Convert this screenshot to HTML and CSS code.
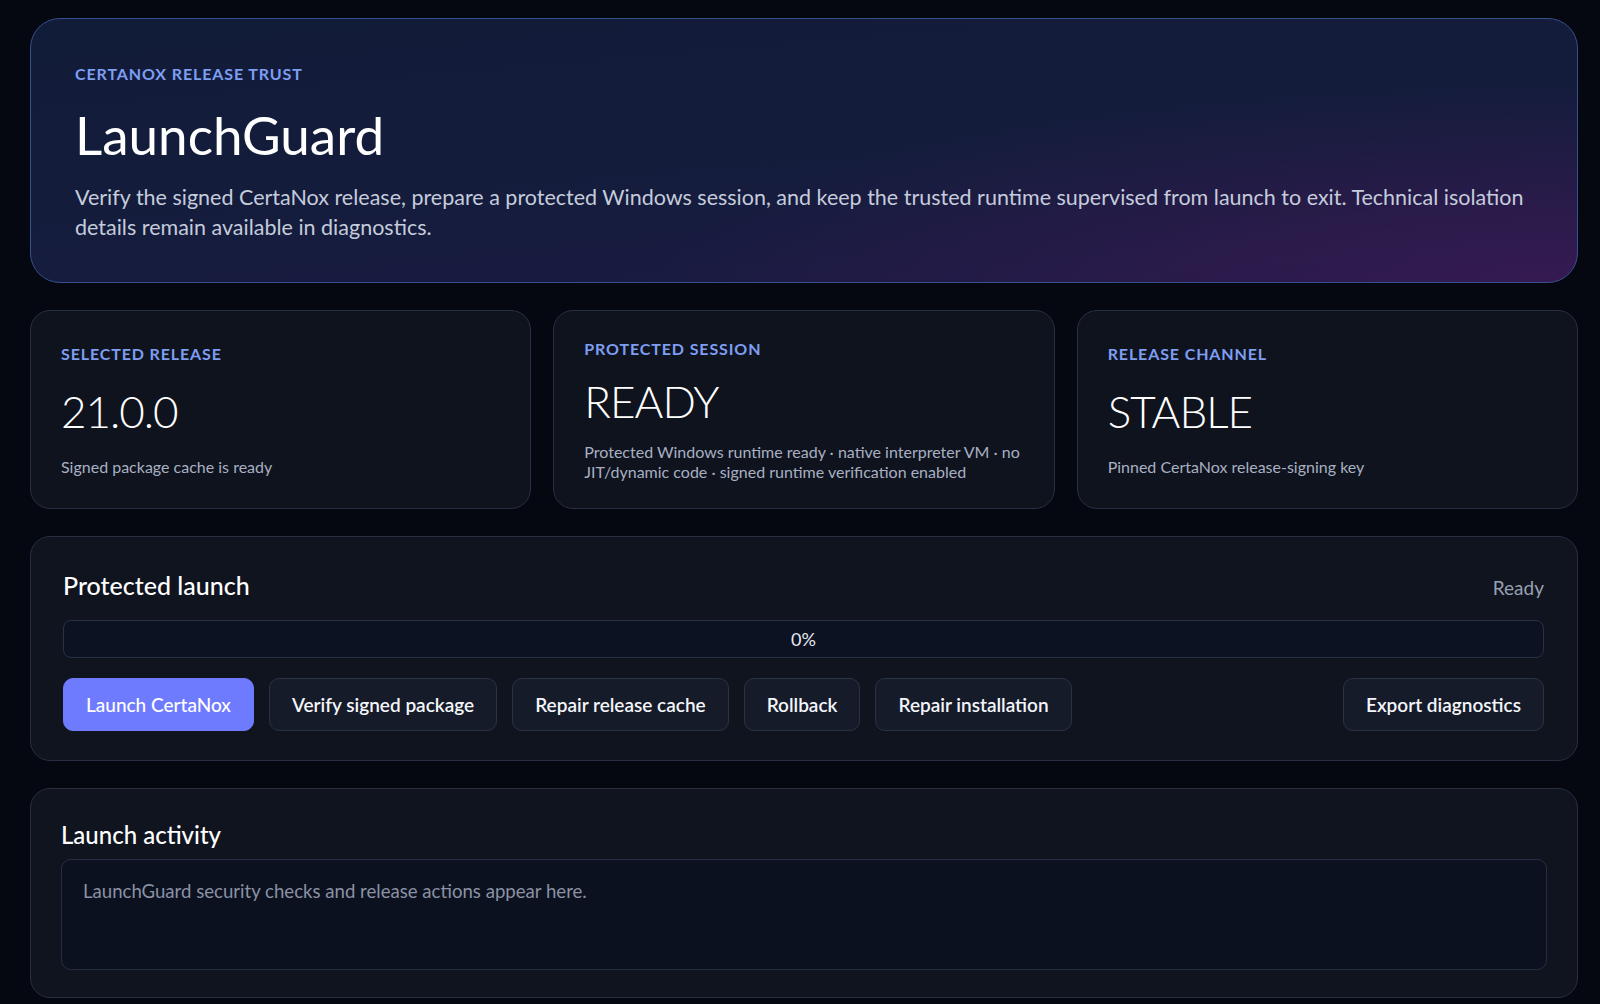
FILE: index.html
```html
<!DOCTYPE html>
<html lang="en">
<head>
    <meta charset="UTF-8">
    <meta name="viewport" content="width=device-width, initial-scale=1.0">
    <title>LaunchGuard</title>
    <link rel="stylesheet" href="styles.css">
</head>
<body>
    <main class="shell">
        <section class="hero">
            <p class="eyebrow">CERTANOX RELEASE TRUST</p>
            <h1 class="hero-title">LaunchGuard</h1>
            <p class="hero-text">Verify the signed CertaNox release, prepare a protected Windows session, and keep the trusted runtime supervised from launch to exit. Technical isolation details remain available in diagnostics.</p>
        </section>

        <section class="stats">
            <div class="stat">
                <p class="eyebrow">SELECTED RELEASE</p>
                <div class="stat-value">21.0.0</div>
                <p class="stat-note">Signed package cache is ready</p>
            </div>
            <div class="stat">
                <p class="eyebrow">PROTECTED SESSION</p>
                <div class="stat-value">READY</div>
                <p class="stat-note">Protected Windows runtime ready · native interpreter VM · no JIT/dynamic code · signed runtime verification enabled</p>
            </div>
            <div class="stat">
                <p class="eyebrow">RELEASE CHANNEL</p>
                <div class="stat-value">STABLE</div>
                <p class="stat-note">Pinned CertaNox release-signing key</p>
            </div>
        </section>

        <section class="panel launch">
            <div class="panel-head">
                <h2 class="panel-title">Protected launch</h2>
                <span class="status">Ready</span>
            </div>
            <div class="progress">
                <div class="progress-fill" style="width: 0%"></div>
                <span class="progress-label">0%</span>
            </div>
            <div class="actions">
                <button class="btn btn-primary">Launch CertaNox</button>
                <button class="btn">Verify signed package</button>
                <button class="btn">Repair release cache</button>
                <button class="btn">Rollback</button>
                <button class="btn">Repair installation</button>
                <button class="btn btn-end">Export diagnostics</button>
            </div>
        </section>

        <section class="panel activity">
            <h2 class="panel-title">Launch activity</h2>
            <div class="log">
                <p class="log-empty">LaunchGuard security checks and release actions appear here.</p>
            </div>
        </section>
    </main>
</body>
</html>
```

FILE: styles.css
```css
*{
    margin: 0;
    padding: 0;
    box-sizing: border-box;
}
html,body{
    width: 100%;
    min-height: 100%;
    background-color: #050811;
}
body{
    font-family: "Segoe UI", Lato, "Noto Sans", sans-serif;
    color: #f3f5fa;
}
.shell{
    display: flex;
    flex-direction: column;
    gap: 27px;
    padding: 18px 22px 30px 30px;
}
.eyebrow{
    font-size: 16px;
    font-weight: 700;
    letter-spacing: 0.055em;
    line-height: 20px;
    color: #7d9ef3;
}

/* hero */
.hero{
    padding: 45px 44px 40px;
    border: 1px solid #35518d;
    border-radius: 30px;
    background:
        radial-gradient(ellipse 80% 100% at 100% 100%, rgba(74, 26, 92, 0.55), rgba(74, 26, 92, 0) 75%),
        linear-gradient(175deg, #111c38 0%, #151c3d 60%, #1d1a45 100%);
}
.hero-title{
    margin-top: 21px;
    font-size: 53px;
    font-weight: 400;
    line-height: 60px;
    color: #fff;
}
.hero-text{
    margin-top: 17px;
    font-size: 21.5px;
    line-height: 30px;
    color: #c5ccdc;
}

/* stat cards */
.stats{
    display: grid;
    grid-template-columns: repeat(3, 1fr);
    gap: 22px;
}
.stat{
    display: flex;
    flex-direction: column;
    justify-content: space-evenly;
    padding: 28px 30px 26px;
    background-color: #0f131e;
    border: 1px solid #283042;
    border-radius: 20px;
}
.stat-value{
    margin-top: 17px;
    font-size: 44px;
    font-weight: 300;
    letter-spacing: -1px;
    line-height: 50px;
    color: #fff;
}
.stat-note{
    margin-top: 16px;
    font-size: 16px;
    line-height: 20px;
    color: #a8b0c2;
}

/* panels */
.panel{
    padding: 32px 33px 29px 32px;
    background-color: #10141f;
    border: 1px solid #272f41;
    border-radius: 20px;
}
.panel-head{
    display: flex;
    align-items: baseline;
    justify-content: space-between;
}
.panel-title{
    font-size: 25px;
    font-weight: 500;
    line-height: 32px;
    color: #fff;
}
.status{
    font-size: 19px;
    line-height: 24px;
    color: #98a0b1;
}
.progress{
    position: relative;
    display: flex;
    align-items: center;
    justify-content: center;
    height: 38px;
    margin-top: 19px;
    background-color: #0c1222;
    border: 1px solid #283246;
    border-radius: 8px;
    overflow: hidden;
}
.progress-fill{
    position: absolute;
    left: 0;
    top: 0;
    bottom: 0;
    background-color: #6e7bff;
}
.progress-label{
    position: relative;
    font-size: 18px;
    color: #e6e9f0;
}
.actions{
    display: flex;
    gap: 15px;
    margin-top: 20px;
}
.btn{
    height: 53px;
    padding: 0 22px;
    font-family: inherit;
    font-size: 19px;
    font-weight: 600;
    color: #f3f5fa;
    background-color: #151b29;
    border: 1px solid #2a3345;
    border-radius: 10px;
    cursor: pointer;
}
.btn-primary{
    font-weight: 500;
    color: #fff;
    background-color: #6e7bff;
    border-color: #6e7bff;
}
.btn-end{
    margin-left: auto;
}

/* activity */
.activity{
    padding: 31px 30px 27px;
}
.activity .panel-title{
    font-size: 24px;
    line-height: 30px;
}
.log{
    height: 111px;
    margin-top: 9px;
    padding: 18px 21px;
    background-color: #0c1120;
    border: 1px solid #262f42;
    border-radius: 10px;
}
.log-empty{
    font-size: 18.6px;
    line-height: 26px;
    color: #8a92a4;
}
```
